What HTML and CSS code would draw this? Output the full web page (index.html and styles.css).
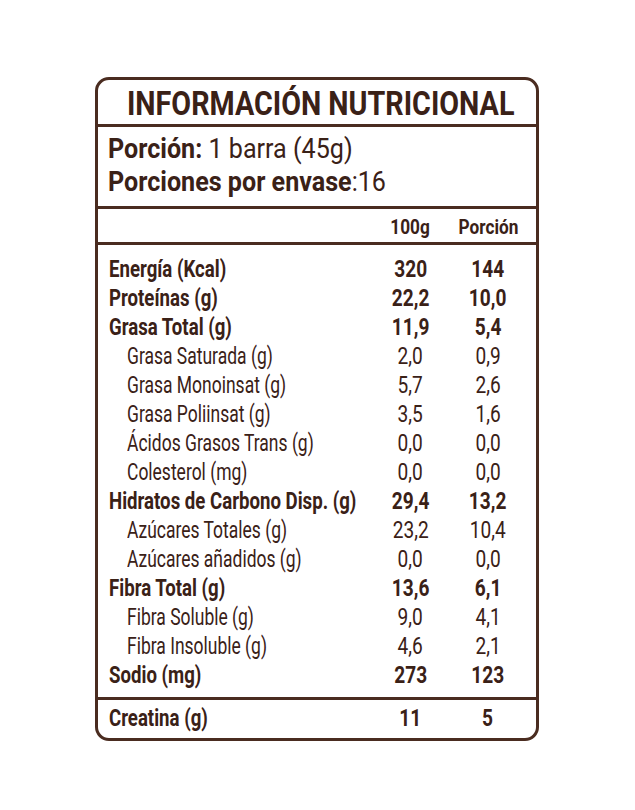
FILE: index.html
```html
<!DOCTYPE html>
<html lang="es">
<head>
<meta charset="utf-8">
<title>Información Nutricional</title>
<link rel="stylesheet" href="styles.css">
</head>
<body>
<div class="card">
  <div class="title"><span class="sx">INFORMACIÓN NUTRICIONAL</span></div>
  <div class="serving">
    <div class="sline"><span class="sx"><b>Porción:</b> 1 barra (45g)</span></div>
    <div class="sline"><span class="sx"><b>Porciones por envase</b>:16</span></div>
  </div>
  <div class="head grid">
    <span></span>
    <span class="num"><span class="sx">100g</span></span>
    <span class="num"><span class="sx">Porción</span></span>
  </div>
  <div class="rows">
    <div class="row grid b"><span class="lab"><span class="sx">Energía (Kcal)</span></span><span class="num"><span class="sx">320</span></span><span class="num"><span class="sx">144</span></span></div>
    <div class="row grid b"><span class="lab"><span class="sx">Proteínas (g)</span></span><span class="num"><span class="sx">22,2</span></span><span class="num"><span class="sx">10,0</span></span></div>
    <div class="row grid b"><span class="lab"><span class="sx">Grasa Total (g)</span></span><span class="num"><span class="sx">11,9</span></span><span class="num"><span class="sx">5,4</span></span></div>
    <div class="row grid sub"><span class="lab"><span class="sx">Grasa Saturada (g)</span></span><span class="num"><span class="sx">2,0</span></span><span class="num"><span class="sx">0,9</span></span></div>
    <div class="row grid sub"><span class="lab"><span class="sx">Grasa Monoinsat (g)</span></span><span class="num"><span class="sx">5,7</span></span><span class="num"><span class="sx">2,6</span></span></div>
    <div class="row grid sub"><span class="lab"><span class="sx">Grasa Poliinsat (g)</span></span><span class="num"><span class="sx">3,5</span></span><span class="num"><span class="sx">1,6</span></span></div>
    <div class="row grid sub"><span class="lab"><span class="sx">Ácidos Grasos Trans (g)</span></span><span class="num"><span class="sx">0,0</span></span><span class="num"><span class="sx">0,0</span></span></div>
    <div class="row grid sub"><span class="lab"><span class="sx">Colesterol (mg)</span></span><span class="num"><span class="sx">0,0</span></span><span class="num"><span class="sx">0,0</span></span></div>
    <div class="row grid b"><span class="lab"><span class="sx">Hidratos de Carbono Disp. (g)</span></span><span class="num"><span class="sx">29,4</span></span><span class="num"><span class="sx">13,2</span></span></div>
    <div class="row grid sub"><span class="lab"><span class="sx">Azúcares Totales (g)</span></span><span class="num"><span class="sx">23,2</span></span><span class="num"><span class="sx">10,4</span></span></div>
    <div class="row grid sub"><span class="lab"><span class="sx">Azúcares añadidos (g)</span></span><span class="num"><span class="sx">0,0</span></span><span class="num"><span class="sx">0,0</span></span></div>
    <div class="row grid b"><span class="lab"><span class="sx">Fibra Total (g)</span></span><span class="num"><span class="sx">13,6</span></span><span class="num"><span class="sx">6,1</span></span></div>
    <div class="row grid sub"><span class="lab"><span class="sx">Fibra Soluble (g)</span></span><span class="num"><span class="sx">9,0</span></span><span class="num"><span class="sx">4,1</span></span></div>
    <div class="row grid sub"><span class="lab"><span class="sx">Fibra Insoluble (g)</span></span><span class="num"><span class="sx">4,6</span></span><span class="num"><span class="sx">2,1</span></span></div>
    <div class="row grid b"><span class="lab"><span class="sx">Sodio (mg)</span></span><span class="num"><span class="sx">273</span></span><span class="num"><span class="sx">123</span></span></div>
  </div>
  <div class="extra grid b"><span class="lab"><span class="sx">Creatina (g)</span></span><span class="num"><span class="sx">11</span></span><span class="num"><span class="sx">5</span></span></div>
</div>
</body>
</html>
```
FILE: styles.css
```css
html, body {
  margin: 0;
  padding: 0;
  background: #ffffff;
}
body {
  font-family: Roboto, "Liberation Sans", sans-serif;
  color: #3a2117;
  padding-top: 77px;
  padding-left: 95px;
}
.card {
  width: 444px;
  box-sizing: border-box;
  border: 3px solid #4a2c20;
  border-radius: 14px;
  overflow: hidden;
}
.sx {
  display: inline-block;
  transform: scaleX(0.81);
  transform-origin: left center;
  white-space: nowrap;
}
.title {
  padding-top: 3px;
  height: 41px;
  line-height: 41px;
  font-size: 33px;
  font-weight: 700;
  text-align: center;
  border-bottom: 3px solid #4a2c20;
}
.title .sx {
  transform: scaleX(0.87);
  transform-origin: center center;
}
.serving {
  padding: 6px 0 7px 10px;
  font-size: 27px;
  line-height: 33px;
  border-bottom: 3px solid #4a2c20;
}
.serving .sx {
  transform: scaleX(0.93);
}
.serving b {
  font-weight: 700;
}
.grid {
  display: grid;
  grid-template-columns: minmax(0, 1fr) 77px 78px;
  padding: 0 9px 0 11px;
}
.lab {
  white-space: nowrap;
  overflow: visible;
}
.num {
  text-align: center;
}
.num .sx {
  transform: scaleX(0.83);
  transform-origin: center center;
}
.head {
  padding-top: 4px;
  height: 29px;
  line-height: 29px;
  font-size: 21px;
  font-weight: 700;
  border-bottom: 3px solid #4a2c20;
}
.head .num .sx {
  transform: scaleX(0.82);
}
.rows {
  padding: 9.5px 0 7.5px;
  border-bottom: 3px solid #4a2c20;
}
.row {
  height: 29px;
  line-height: 29px;
  font-size: 23px;
}
.b {
  font-weight: 700;
}
.sub {
  font-weight: 400;
}
.sub .lab {
  padding-left: 18px;
}
.sub .lab .sx {
  transform: scaleX(0.76);
}
.extra {
  height: 38px;
  line-height: 38px;
  font-size: 23px;
}
```
